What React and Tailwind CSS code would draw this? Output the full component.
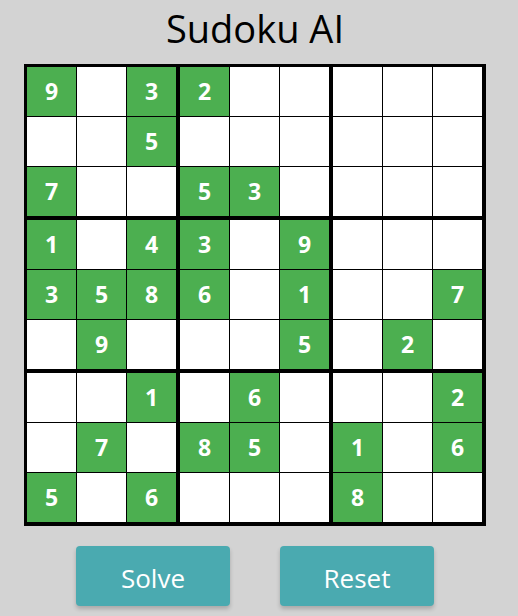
import React from 'react'

const puzzle = [
  [9, 0, 3, 2, 0, 0, 0, 0, 0],
  [0, 0, 5, 0, 0, 0, 0, 0, 0],
  [7, 0, 0, 5, 3, 0, 0, 0, 0],
  [1, 0, 4, 3, 0, 9, 0, 0, 0],
  [3, 5, 8, 6, 0, 1, 0, 0, 7],
  [0, 9, 0, 0, 0, 5, 0, 2, 0],
  [0, 0, 1, 0, 6, 0, 0, 0, 2],
  [0, 7, 0, 8, 5, 0, 1, 0, 6],
  [5, 0, 6, 0, 0, 0, 8, 0, 0]
]

const Cell = ({ value }) => (
  <div
    className={`w-[49px] h-[49px] flex items-center justify-center text-[23px] font-bold text-white ${
      value ? 'bg-[#4caf50]' : 'bg-white'
    }`}
  >
    {value ? value : ''}
  </div>
)

export default function App() {
  return (
    <div
      className="w-[518px] h-[616px] bg-[#d3d3d3] flex flex-col items-center pr-2"
      style={{ fontFamily: '"Open Sans", "Noto Sans", sans-serif' }}
    >
      <h1 className="h-16 flex items-center text-[38px] text-black leading-none pb-2">Sudoku AI</h1>

      <div className="bg-black pt-[3px] pl-[3px] pr-[4px] pb-[4px] grid grid-cols-3 gap-[4px]">
        {Array.from({ length: 9 }).map((_, b) => (
          <div key={b} className="grid grid-cols-3 gap-px bg-black">
            {Array.from({ length: 9 }).map((_, c) => {
              const row = Math.floor(b / 3) * 3 + Math.floor(c / 3)
              const col = (b % 3) * 3 + (c % 3)
              return <Cell key={c} value={puzzle[row][col]} />
            })}
          </div>
        ))}
      </div>

      <div className="flex gap-[50px] mt-5">
        <button className="w-[154px] h-[60px] rounded bg-[#4aaab0] text-white text-[26px] pt-1 shadow-[0_3px_4px_rgba(0,0,0,0.2)]">
          Solve
        </button>
        <button className="w-[154px] h-[60px] rounded bg-[#4aaab0] text-white text-[26px] pt-1 shadow-[0_3px_4px_rgba(0,0,0,0.2)]">
          Reset
        </button>
      </div>
    </div>
  )
}
